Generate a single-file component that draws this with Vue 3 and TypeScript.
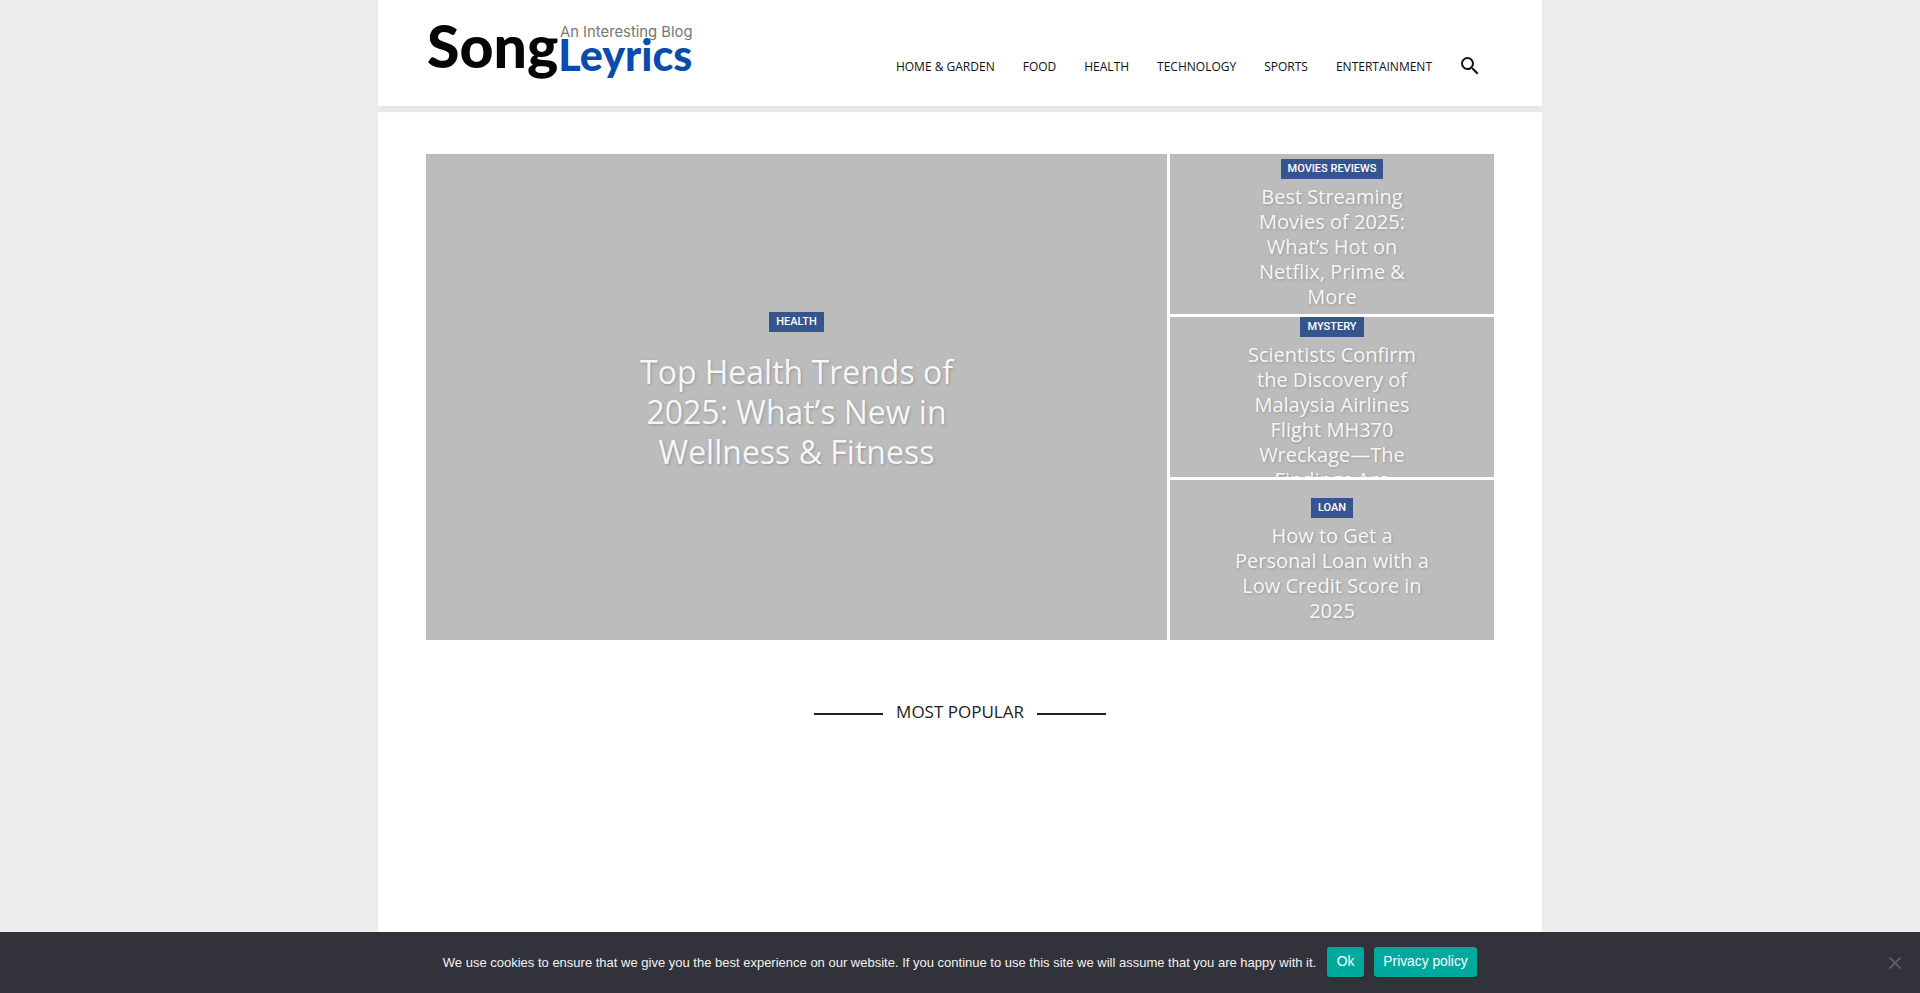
<script setup lang="ts">
interface Tile { tag: string; title: string }
const nav: string[] = ['HOME & GARDEN', 'FOOD', 'HEALTH', 'TECHNOLOGY', 'SPORTS', 'ENTERTAINMENT']
const tiles: Tile[] = [
  { tag: 'MOVIES REVIEWS', title: 'Best Streaming Movies of 2025: What’s Hot on Netflix, Prime & More' },
  { tag: 'MYSTERY', title: 'Scientists Confirm the Discovery of Malaysia Airlines Flight MH370 Wreckage—The Findings Are' },
  { tag: 'LOAN', title: 'How to Get a Personal Loan with a Low Credit Score in 2025' },
]
</script>

<template>
  <div class="page">
    <header class="header">
      <a class="logo">
        <span class="logo-tagline">An Interesting Blog</span>
        <span class="logo-word"><span class="logo-song">Song</span><span class="logo-leyrics">Leyrics</span></span>
      </a>
      <nav class="nav">
        <a v-for="item in nav" :key="item" class="nav-link">{{ item }}</a>
        <svg class="search" viewBox="0 0 24 24" width="24" height="24" aria-hidden="true">
          <path fill="#111" d="M15.5 14h-.79l-.28-.27A6.47 6.47 0 0 0 16 9.5 6.5 6.5 0 1 0 9.5 16c1.61 0 3.09-.59 4.23-1.57l.27.28v.79l5 4.99L20.49 19l-4.99-5zm-6 0C7.01 14 5 11.99 5 9.5S7.01 5 9.5 5 14 7.01 14 9.5 11.99 14 9.5 14z" />
        </svg>
      </nav>
    </header>
    <main class="content">
      <section class="grid">
        <article class="tile tile-main">
          <span class="tag">HEALTH</span>
          <h2 class="title-main">Top Health Trends of 2025: What’s New in Wellness &amp; Fitness</h2>
        </article>
        <article v-for="t in tiles" :key="t.tag" class="tile tile-side">
          <span class="tag">{{ t.tag }}</span>
          <h3 class="title-side">{{ t.title }}</h3>
        </article>
      </section>
      <div class="section-head">
        <span class="rule"></span>
        <span class="section-title">MOST POPULAR</span>
        <span class="rule"></span>
      </div>
    </main>
    <div class="cookie">
      <span class="cookie-text">We use cookies to ensure that we give you the best experience on our website. If you continue to use this site we will assume that you are happy with it.</span>
      <a class="cookie-btn">Ok</a>
      <a class="cookie-btn">Privacy policy</a>
      <svg class="cookie-close" viewBox="0 0 14 14" width="14" height="14" aria-hidden="true">
        <path d="M1.5 1.5l11 11M12.5 1.5l-11 11" stroke="#5c5c63" stroke-width="2" fill="none" />
      </svg>
    </div>
  </div>
</template>

<style>
html, body { margin: 0; background: #ededed; overflow: hidden; }
</style>

<style scoped>
.page {
  width: 1164px;
  min-height: 100vh;
  margin: 0 auto;
  font-family: "Open Sans", sans-serif;
  display: flex;
  flex-direction: column;
  gap: 6px;
}
.header {
  height: 106px;
  background: #fff;
  box-shadow: 0 6px 8px -3px rgba(0, 0, 0, 0.05);
  display: flex;
  justify-content: space-between;
  padding: 0 48px;
  position: relative;
  z-index: 1;
}
.logo {
  position: relative;
  display: block;
  width: 270px;
  height: 106px;
}
.logo-tagline {
  position: absolute;
  left: 134px;
  top: 24px;
  font: 400 14.8px/17px "Inter", sans-serif;
  color: #777;
  white-space: nowrap;
}
.logo-word {
  position: absolute;
  left: 1px;
  top: 10px;
  font: 900 59px/72px "Lato", sans-serif;
  white-space: nowrap;
  display: flex;
  align-items: baseline;
}
.logo-song { color: #050505; }
.logo-leyrics {
  color: #0a4bab;
  font-size: 43px;
  line-height: 40px;
  transform: translateY(3px);
}
.nav {
  display: flex;
  align-items: center;
  height: 132px;
  margin-right: 12px;
}
.nav-link {
  font-size: 12px;
  color: #111;
  padding: 0 14px;
  white-space: nowrap;
}
.search { margin-left: 12px; }
.content {
  flex: 1;
  background: #fff;
  padding: 42px 48px 0;
}
.grid {
  display: grid;
  grid-template-columns: 741px 324px;
  grid-template-rows: repeat(3, 160px);
  gap: 3px;
}
.tile {
  background: #bcbcbc;
  display: flex;
  flex-direction: column;
  align-items: center;
  justify-content: safe center;
  overflow: hidden;
  text-align: center;
  color: #fff;
}
.tile-main {
  grid-row: 1 / 4;
  padding-bottom: 10px;
}
.tag {
  flex: none;
  font: 500 11px/20px "Roboto", sans-serif;
  background: #36558f;
  color: #fff;
  padding: 0 7px;
}
.title-main {
  margin: 20px 0 0;
  width: 340px;
  font-size: 32px;
  line-height: 40px;
  font-weight: 400;
  color: rgba(255, 255, 255, 0.92);
  text-shadow: 1px 1px 3px rgba(0, 0, 0, 0.2);
}
.title-side {
  margin: 5px 0 0;
  width: 200px;
  font-size: 20px;
  line-height: 25px;
  font-weight: 400;
  color: rgba(255, 255, 255, 0.92);
  text-shadow: 1px 1px 3px rgba(0, 0, 0, 0.2);
}
.section-head {
  display: flex;
  justify-content: center;
  align-items: center;
  gap: 13px;
  margin-top: 57px;
  height: 30px;
}
.rule {
  width: 69px;
  height: 2px;
  background: #222;
  margin-top: 3px;
}
.section-title {
  font-size: 17px;
  color: #222;
  line-height: 30px;
}
.cookie {
  position: fixed;
  left: 0;
  right: 0;
  bottom: 0;
  height: 60px;
  padding-bottom: 1px;
  background: #32323a;
  display: flex;
  align-items: center;
  justify-content: center;
  gap: 10px;
  font: 13px "Liberation Sans", Arial, sans-serif;
  color: #f2f2f2;
}
.cookie-text { margin-right: 1px; }
.cookie-btn {
  height: 30px;
  line-height: 30px;
  padding: 0 9.5px;
  font-size: 13.8px;
  background: #00a99d;
  color: #fff;
  border-radius: 3px;
  box-shadow: 0 1px 1px rgba(0, 0, 0, 0.25);
}
.cookie-close {
  position: absolute;
  right: 18px;
  top: 24px;
}
</style>
